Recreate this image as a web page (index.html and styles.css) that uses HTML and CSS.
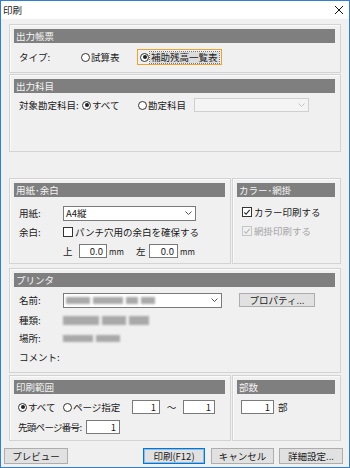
FILE: index.html
```html
<!DOCTYPE html>
<html lang="ja">
<head>
  <meta charset="UTF-8" />
  <title>印刷</title>
  <link rel="stylesheet" href="styles.css">
</head>
<body>
  <div class="window">
    <div class="titlebar">
      <span>印刷</span>
      <svg class="close" width="10" height="10" viewBox="0 0 10 10">
        <path d="M1 1 L9 9 M9 1 L1 9" stroke="#111" stroke-width="1" fill="none"/>
      </svg>
    </div>

    <div class="content">
      <!-- 出力帳票 -->
      <div class="group g-output">
        <div class="group-head">出力帳票</div>
        <div class="row m6">
          <span class="label w-type">タイプ:</span>
          <span class="opt w-opt1"><span class="radio"></span>試算表</span>
          <span class="focus-box"><span class="radio on"></span><span class="focus-text">補助残高一覧表</span></span>
        </div>
      </div>

      <!-- 出力科目 -->
      <div class="group g-account">
        <div class="group-head">出力科目</div>
        <div class="row m4">
          <span class="label w-acc">対象勘定科目:</span>
          <span class="opt w-opt2"><span class="radio on"></span>すべて</span>
          <span class="opt w-opt2"><span class="radio"></span>勘定科目</span>
          <span class="select disabled w-acc-sel"><span></span><svg class="chev" width="7" height="4" viewBox="0 0 7 4"><path d="M0.5 0.5 L3.5 3.5 L6.5 0.5" stroke="#c4c4c4" fill="none"/></svg></span>
        </div>
      </div>

      <div class="split s-paper">
        <!-- 用紙・余白 -->
        <div class="group g-left">
          <div class="group-head">用紙･余白</div>
          <div class="row m8">
            <span class="label w-lab">用紙:</span>
            <span class="select w-paper"><span>A4縦</span><svg class="chev" width="7" height="4" viewBox="0 0 7 4"><path d="M0.5 0.5 L3.5 3.5 L6.5 0.5" stroke="#555" fill="none"/></svg></span>
          </div>
          <div class="row m3">
            <span class="label w-lab">余白:</span>
            <span class="opt"><span class="check"></span>パンチ穴用の余白を確保する</span>
          </div>
          <div class="row m3">
            <span class="label w-lab"></span>
            <span class="w-up">上</span>
            <span class="num w-m1">0.0</span>
            <span class="unit w-u1">mm</span>
            <span class="w-left">左</span>
            <span class="num w-m2">0.0</span>
            <span class="unit">mm</span>
          </div>
        </div>

        <!-- カラー・網掛 -->
        <div class="group g-right">
          <div class="group-head">カラー･網掛</div>
          <div class="row m7 pad5">
            <span class="opt"><span class="check">
              <svg width="9" height="9" viewBox="0 0 9 9"><path d="M1.5 4.5 L3.5 6.5 L7.5 1.5" stroke="#222" stroke-width="1.2" fill="none"/></svg>
            </span>カラー印刷する</span>
          </div>
          <div class="row m3 pad5">
            <span class="opt muted"><span class="check off">
              <svg width="9" height="9" viewBox="0 0 9 9"><path d="M1.5 4.5 L3.5 6.5 L7.5 1.5" stroke="#b5b5b5" stroke-width="1.2" fill="none"/></svg>
            </span>網掛印刷する</span>
          </div>
        </div>
      </div>

      <!-- プリンタ -->
      <div class="group g-printer">
        <div class="group-head">プリンタ</div>
        <div class="row m5">
          <span class="label w-lab">名前:</span>
          <span class="select w-printer">
            <span class="blur-line">
              <span class="blot b1"></span><span class="blot b2"></span><span class="blot b3"></span><span class="blot b4"></span>
            </span>
            <svg class="chev" width="7" height="4" viewBox="0 0 7 4"><path d="M0.5 0.5 L3.5 3.5 L6.5 0.5" stroke="#555" fill="none"/></svg>
          </span>
          <span class="btn w-prop">プロパティ...</span>
        </div>
        <div class="row m4">
          <span class="label w-lab">種類:</span>
          <span class="blur-line">
            <span class="blot b5"></span><span class="blot b6"></span><span class="blot b7"></span>
          </span>
        </div>
        <div class="row m2">
          <span class="label w-lab">場所:</span>
          <span class="blur-line">
            <span class="blot b8"></span><span class="blot b9"></span>
          </span>
        </div>
        <div class="row m3">
          <span class="label w-lab">コメント:</span>
        </div>
      </div>

      <div class="split s-range">
        <!-- 印刷範囲 -->
        <div class="group g-left">
          <div class="group-head">印刷範囲</div>
          <div class="row m5 pad4">
            <span class="opt w-all"><span class="radio on"></span>すべて</span>
            <span class="opt w-page"><span class="radio"></span>ページ指定</span>
            <span class="num w-p1">1</span>
            <span class="tilde">～</span>
            <span class="num w-p2">1</span>
          </div>
          <div class="row m4 pad4">
            <span class="label w-first">先頭ページ番号:</span>
            <span class="num w-p3">1</span>
          </div>
        </div>

        <!-- 部数 -->
        <div class="group g-right">
          <div class="group-head">部数</div>
          <div class="row m5 pad4">
            <span class="num w-copies">1</span>
            <span class="copies-unit">部</span>
          </div>
        </div>
      </div>
    </div>

    <div class="footer">
      <span class="btn w-preview">プレビュー</span>
      <span class="spacer"></span>
      <span class="btn default w-print">印刷(F12)</span>
      <span class="btn w-cancel">キャンセル</span>
      <span class="btn w-detail">詳細設定...</span>
    </div>
  </div>
</body>
</html>
```

FILE: styles.css
```css
* {
  box-sizing: border-box;
}

body {
  margin: 0;
  font-family: "Noto Sans CJK JP", sans-serif;
  font-size: 9.5px;
  color: #1a1a1a;
}

.window {
  width: 350px;
  height: 468px;
  border: 1px solid #2f7fd4;
  background: #f0f0f0;
  display: flex;
  flex-direction: column;
}

.titlebar {
  height: 18px;
  background: #fff;
  display: flex;
  align-items: center;
  justify-content: space-between;
  padding: 0 5px 0 2px;
}

.close {
  display: block;
}

.content {
  padding: 5px 8px 0;
  display: flex;
  flex-direction: column;
}

.group {
  border: 1px solid #d3d3d3;
  box-shadow: inset 1px 1px 0 #fafafa;
  padding: 4px 5px 0 4px;
}

.group-head {
  height: 14px;
  line-height: 14px;
  background: #7f7f7f;
  color: #f4f4f4;
  padding-left: 2px;
}

.g-output { height: 49px; }
.g-account { height: 78px; margin-top: 1px; }
.g-printer { height: 105px; margin-top: 4px; }

.split {
  display: flex;
  gap: 1px;
}

.s-paper { height: 86px; margin-top: 26px; }
.s-range { height: 66px; margin-top: 2px; }

.g-left { width: 222px; }
.g-right { flex: 1; }

.row {
  display: flex;
  align-items: center;
  height: 16px;
  padding-left: 5px;
  white-space: nowrap;
}

.pad4 { padding-left: 4px; }
.pad5 { padding-left: 5px; }

.m2 { margin-top: 2px; }
.m3 { margin-top: 3px; }
.m4 { margin-top: 4px; }
.m5 { margin-top: 5px; }
.m6 { margin-top: 6px; }
.m7 { margin-top: 7px; }
.m8 { margin-top: 8px; }

.label { flex: none; }
.w-type { width: 62px; }
.w-acc { width: 63px; }
.w-lab { width: 44px; }
.w-first { width: 68px; letter-spacing: -0.7px; }

.opt {
  display: flex;
  align-items: center;
  flex: none;
}

.w-opt1 { width: 56px; }
.w-opt2 { width: 56px; }
.w-all { width: 45px; }
.w-page { width: 69px; }

.muted { color: #a6a6a6; }

.radio {
  width: 9px;
  height: 9px;
  border: 1px solid #333;
  border-radius: 50%;
  background: #fff;
  margin-right: 1px;
  position: relative;
  flex: none;
}

.radio.on::after {
  content: "";
  position: absolute;
  left: 1.5px;
  top: 1.5px;
  width: 4px;
  height: 4px;
  border-radius: 50%;
  background: #222;
}

.check {
  width: 10px;
  height: 10px;
  border: 1px solid #333;
  background: #fff;
  margin-right: 2px;
  flex: none;
  display: flex;
  align-items: center;
  justify-content: center;
}

.check svg {
  display: block;
}

.check.off {
  border-color: #c6c6c6;
  background: #f0f0f0;
}

.focus-box {
  width: 85px;
  height: 16px;
  border: 1px solid #f0a22e;
  padding-left: 2px;
  display: flex;
  align-items: center;
}

.focus-text {
  outline: 1px dotted #777;
  background: #dcdcdc;
  line-height: 11px;
  padding: 0 1px;
}

.select {
  height: 15px;
  background: #fff;
  border: 1px solid #7a7a7a;
  display: flex;
  align-items: center;
  justify-content: space-between;
  padding: 0 3px 0 2px;
  flex: none;
}

.select.disabled {
  background: #f4f4f4;
  border-color: #d0d0d0;
  height: 14px;
}

.chev { display: block; }

.w-acc-sel { width: 115px; }
.w-paper { width: 133px; }
.w-printer { width: 159px; }

.num {
  height: 14px;
  background: #fff;
  border: 1px solid #7a7a7a;
  text-align: right;
  padding-right: 3px;
  line-height: 12px;
  flex: none;
}

.w-m1 { width: 28px; }
.w-m2 { width: 29px; }
.w-p1 { width: 28px; }
.w-p2 { width: 32px; }
.w-p3 { width: 34px; }
.w-copies { width: 33px; }

.w-up { width: 16px; flex: none; }
.w-left { width: 13px; flex: none; }

.unit {
  font-size: 8px;
  padding-left: 2px;
  flex: none;
}

.w-u1 { width: 29px; }

.tilde {
  width: 23px;
  text-align: center;
  flex: none;
}

.copies-unit { margin-left: 4px; }

.btn {
  height: 14px;
  background: #e1e1e1;
  border: 1px solid #adadad;
  display: flex;
  align-items: center;
  justify-content: center;
  flex: none;
}

.w-prop { width: 76px; margin-left: 17px; }

.blur-line {
  display: flex;
  gap: 3px;
  align-items: center;
}

.blot {
  height: 7px;
  background: #a9a9a9;
  filter: blur(1px);
}

.b1 { width: 24px; }
.b2 { width: 30px; }
.b3 { width: 12px; }
.b4 { width: 14px; }
.b5 { width: 36px; height: 9px; }
.b6 { width: 24px; height: 9px; }
.b7 { width: 20px; height: 9px; }
.b8 { width: 30px; }
.b9 { width: 24px; }

.footer {
  display: flex;
  padding: 7px 6px 0 3px;
  gap: 5px;
}

.footer .btn { height: 16px; }

.spacer { flex: 1; }

.btn.default {
  border-color: #0078d7;
  box-shadow: inset 0 0 0 1px #8fbce6;
}

.w-preview { width: 64px; }
.w-print { width: 62px; margin-right: 1px; }
.w-cancel { width: 63px; }
.w-detail { width: 64px; }
```
